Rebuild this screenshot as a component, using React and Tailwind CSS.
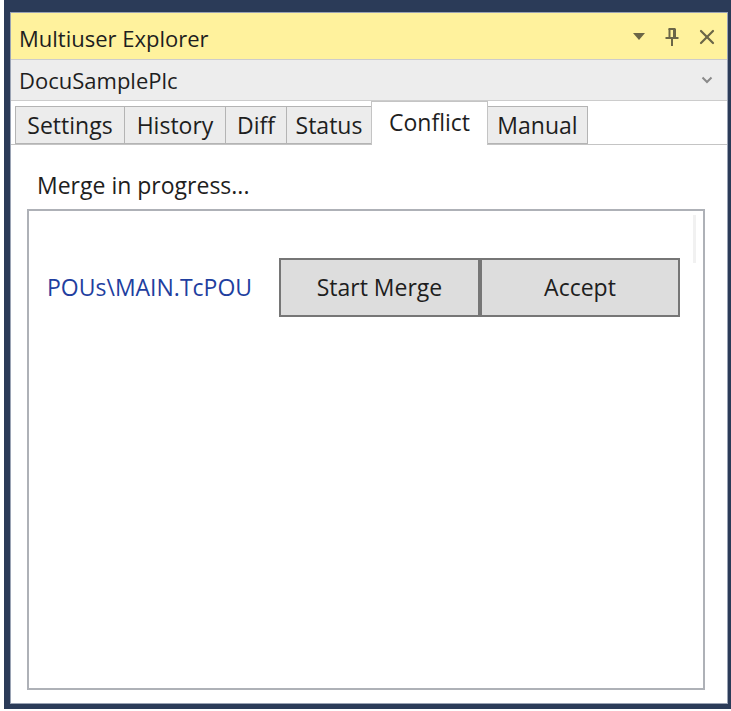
import { X } from "lucide-react";

const font = { fontFamily: '"Open Sans", "Noto Sans", sans-serif' };

const tabs = ["Settings", "History", "Diff", "Status", "Conflict", "Manual"];
const tabWidths = {
  Settings: "w-[110px]",
  History: "w-[102px]",
  Diff: "w-[62px]",
  Status: "w-[86px]",
  Conflict: "w-[117px]",
  Manual: "w-[101px]",
};

function Tab({ label, active }) {
  if (active) {
    return (
      <div
        className={`${tabWidths[label]} h-[44px] -mb-px -mr-px bg-white border border-b-0 border-[#c4c4c4] flex items-start justify-center pt-[3px] text-[23px] text-[#1e1e1e] relative z-10`}
      >
        {label}
      </div>
    );
  }
  return (
    <div
      className={`${tabWidths[label]} h-[38px] bg-[#ececec] border border-[#b4b4b4] -mr-px flex items-center justify-center text-[23px] text-[#1e1e1e]`}
    >
      {label}
    </div>
  );
}

function PinIcon() {
  return (
    <svg width="16" height="20" viewBox="0 0 16 20" fill="none" stroke="#6b6647" strokeWidth="2">
      <path d="M4.5 2 H11.5" />
      <path d="M5.5 2 V10" />
      <path d="M10.5 2 V10" strokeWidth="3" />
      <path d="M1.5 11 H14.5" />
      <path d="M8 11 V19" />
    </svg>
  );
}

export default function App() {
  return (
    <div className="w-[731px] h-[711px] bg-white pl-[4px] pb-[2px]" style={font}>
      <div className="h-full bg-[#2b3b58] pt-[12px] pl-[6px] pr-[3px] pb-[5px] flex flex-col">
        <div className="flex-1 flex flex-col bg-white border border-[#9aa3b4]">
          {/* title bar */}
          <div className="h-[46px] bg-[#fff29d] flex items-center pt-[5px] pl-[8px] pr-[8px] text-[22px] text-[#1e1e1e]">
            <span className="flex-1">Multiuser Explorer</span>
            <span className="w-0 h-0 border-l-[6px] border-r-[6px] border-t-[7px] border-l-transparent border-r-transparent border-t-[#6b6647] mr-[19px] -mt-[4px]" />
            <span className="mr-[15px] -mt-[4px]">
              <PinIcon />
            </span>
            <X className="w-[24px] h-[24px] text-[#6b6647] -mt-[4px]" strokeWidth={2.2} />
          </div>

          {/* project selector */}
          <div className="h-[42px] bg-[#ededed] border-y border-[#cccccc] flex items-center pl-[8px] pr-[14px] text-[22px] text-[#1e1e1e]">
            <span className="flex-1">DocuSamplePlc</span>
            <svg width="12" height="8" viewBox="0 0 12 8" fill="none">
              <path d="M1.5 1.5 L6 6 L10.5 1.5" stroke="#8a8a8a" strokeWidth="2" />
            </svg>
          </div>

          {/* tab strip */}
          <div className="h-[43px] flex items-end pl-[4px]">
            {tabs.map((t) => (
              <Tab key={t} label={t} active={t === "Conflict"} />
            ))}
          </div>

          {/* tab page */}
          <div className="flex-1 flex flex-col border-t border-[#c4c4c4] pl-[16px] pr-[22px] pb-[13px]">
            <div className="h-[64px] flex items-center pt-[16px] pl-[10px] text-[23px] text-[#1e1e1e]">
              Merge in progress...
            </div>
            <div className="flex-1 border-2 border-[#aeb1b7] relative pt-[47px] pl-[18px]">
              <div className="absolute right-[7px] top-[4px] w-[3px] h-[48px] bg-[#f1f1f1]" />
              <div className="flex items-center">
                <span className="w-[232px] text-[23px] text-[#1f3f9f]">POUs\MAIN.TcPOU</span>
                <button className="w-[201px] h-[59px] bg-[#dddddd] border-2 border-[#767676] text-[23px] text-[#1e1e1e]">
                  Start Merge
                </button>
                <button className="w-[200px] h-[59px] bg-[#dddddd] border-2 border-[#767676] text-[23px] text-[#1e1e1e]">
                  Accept
                </button>
              </div>
            </div>
          </div>
        </div>
      </div>
    </div>
  );
}
